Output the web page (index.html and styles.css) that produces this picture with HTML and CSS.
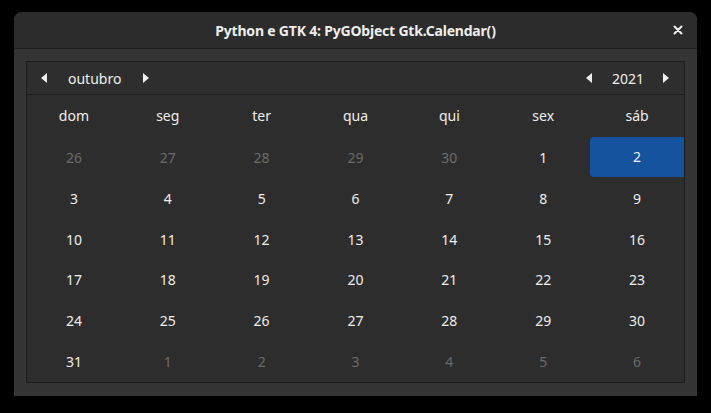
FILE: index.html
```html
<!DOCTYPE html>
<html lang="pt">
<head>
<meta charset="utf-8">
<title>Python e GTK 4: PyGObject Gtk.Calendar()</title>
<link rel="stylesheet" href="styles.css">
</head>
<body>
<div class="window">
  <header class="headerbar">
    <span class="spacer"></span>
    <h1 class="title">Python e GTK 4: PyGObject Gtk.Calendar()</h1>
    <button class="close" aria-label="Fechar">
      <svg width="10" height="10" viewBox="0 0 10 10"><path d="M1.5 1.5 L8.5 8.5 M8.5 1.5 L1.5 8.5" stroke="#eeeeec" stroke-width="2" stroke-linecap="round"/></svg>
    </button>
  </header>
  <main class="content">
    <section class="calendar">
      <div class="cal-header">
        <div class="switcher">
          <span class="arrow left"></span>
          <span class="label month">outubro</span>
          <span class="arrow right"></span>
        </div>
        <div class="switcher">
          <span class="arrow left"></span>
          <span class="label year">2021</span>
          <span class="arrow right"></span>
        </div>
      </div>
      <div class="grid">
        <div class="dayname">dom</div><div class="dayname">seg</div><div class="dayname">ter</div><div class="dayname">qua</div><div class="dayname">qui</div><div class="dayname">sex</div><div class="dayname">sáb</div>
        <div class="day other">26</div><div class="day other">27</div><div class="day other">28</div><div class="day other">29</div><div class="day other">30</div><div class="day">1</div><div class="day selected">2</div>
        <div class="day">3</div><div class="day">4</div><div class="day">5</div><div class="day">6</div><div class="day">7</div><div class="day">8</div><div class="day">9</div>
        <div class="day">10</div><div class="day">11</div><div class="day">12</div><div class="day">13</div><div class="day">14</div><div class="day">15</div><div class="day">16</div>
        <div class="day">17</div><div class="day">18</div><div class="day">19</div><div class="day">20</div><div class="day">21</div><div class="day">22</div><div class="day">23</div>
        <div class="day">24</div><div class="day">25</div><div class="day">26</div><div class="day">27</div><div class="day">28</div><div class="day">29</div><div class="day">30</div>
        <div class="day">31</div><div class="day other">1</div><div class="day other">2</div><div class="day other">3</div><div class="day other">4</div><div class="day other">5</div><div class="day other">6</div>
      </div>
    </section>
  </main>
</div>
</body>
</html>
```
FILE: styles.css
```css
* { box-sizing: border-box; }
html, body { margin: 0; padding: 0; }
body {
  background: #000;
  width: 711px;
  height: 413px;
  padding: 12px 14px 0 14px;
  font-family: "Noto Sans", "Open Sans", sans-serif;
  color: #eeeeec;
}
.window {
  width: 683px;
  height: 384px;
  background: #353535;
  border-radius: 8px 8px 0 0;
  display: flex;
  flex-direction: column;
  overflow: hidden;
}
.headerbar {
  height: 37px;
  flex: none;
  background: #2c2c2c;
  border-bottom: 1px solid #1c1c1c;
  display: grid;
  grid-template-columns: 40px 1fr 40px;
  align-items: center;
}
.title {
  margin: 0;
  text-align: center;
  font-size: 14px;
  font-weight: 700;
  letter-spacing: -0.2px;
  color: #eeeeec;
}
.close {
  justify-self: end;
  margin-right: 12px;
  width: 14px;
  height: 14px;
  padding: 0;
  border: 0;
  background: transparent;
  display: flex;
  align-items: center;
  justify-content: center;
}
.content {
  flex: 1;
  padding: 12px 12px 13px 12px;
  display: flex;
}
.calendar {
  flex: 1;
  border: 1px solid #1d1d1d;
  background: #2d2d2d;
  display: flex;
  flex-direction: column;
}
.cal-header {
  height: 33px;
  flex: none;
  border-bottom: 1px solid #1d1d1d;
  background: #2e2e2e;
  display: flex;
  justify-content: space-between;
  align-items: center;
  padding: 0 15px 0 14px;
}
.switcher {
  display: flex;
  align-items: center;
}
.label {
  font-size: 14px;
  color: #eeeeec;
}
.month { margin: 0 22px 0 21px; }
.year { margin: 0 19px 0 20px; }
.arrow {
  width: 0;
  height: 0;
  border-top: 5px solid transparent;
  border-bottom: 5px solid transparent;
}
.arrow.left { border-right: 6px solid #eeeeec; }
.arrow.right { border-left: 6px solid #eeeeec; }
.grid {
  flex: 1;
  display: grid;
  grid-template-columns: repeat(7, 1fr);
  grid-template-rows: 42px repeat(6, 1fr);
}
.dayname, .day {
  display: flex;
  align-items: center;
  justify-content: center;
  font-size: 14px;
  color: #eeeeec;
}
.dayname { padding-bottom: 2px; }
.day.other { color: #6b6b6b; }
.day.selected {
  background: #15539e;
  border-radius: 4px 0 0 4px;
  margin-bottom: 1px;
}
```
